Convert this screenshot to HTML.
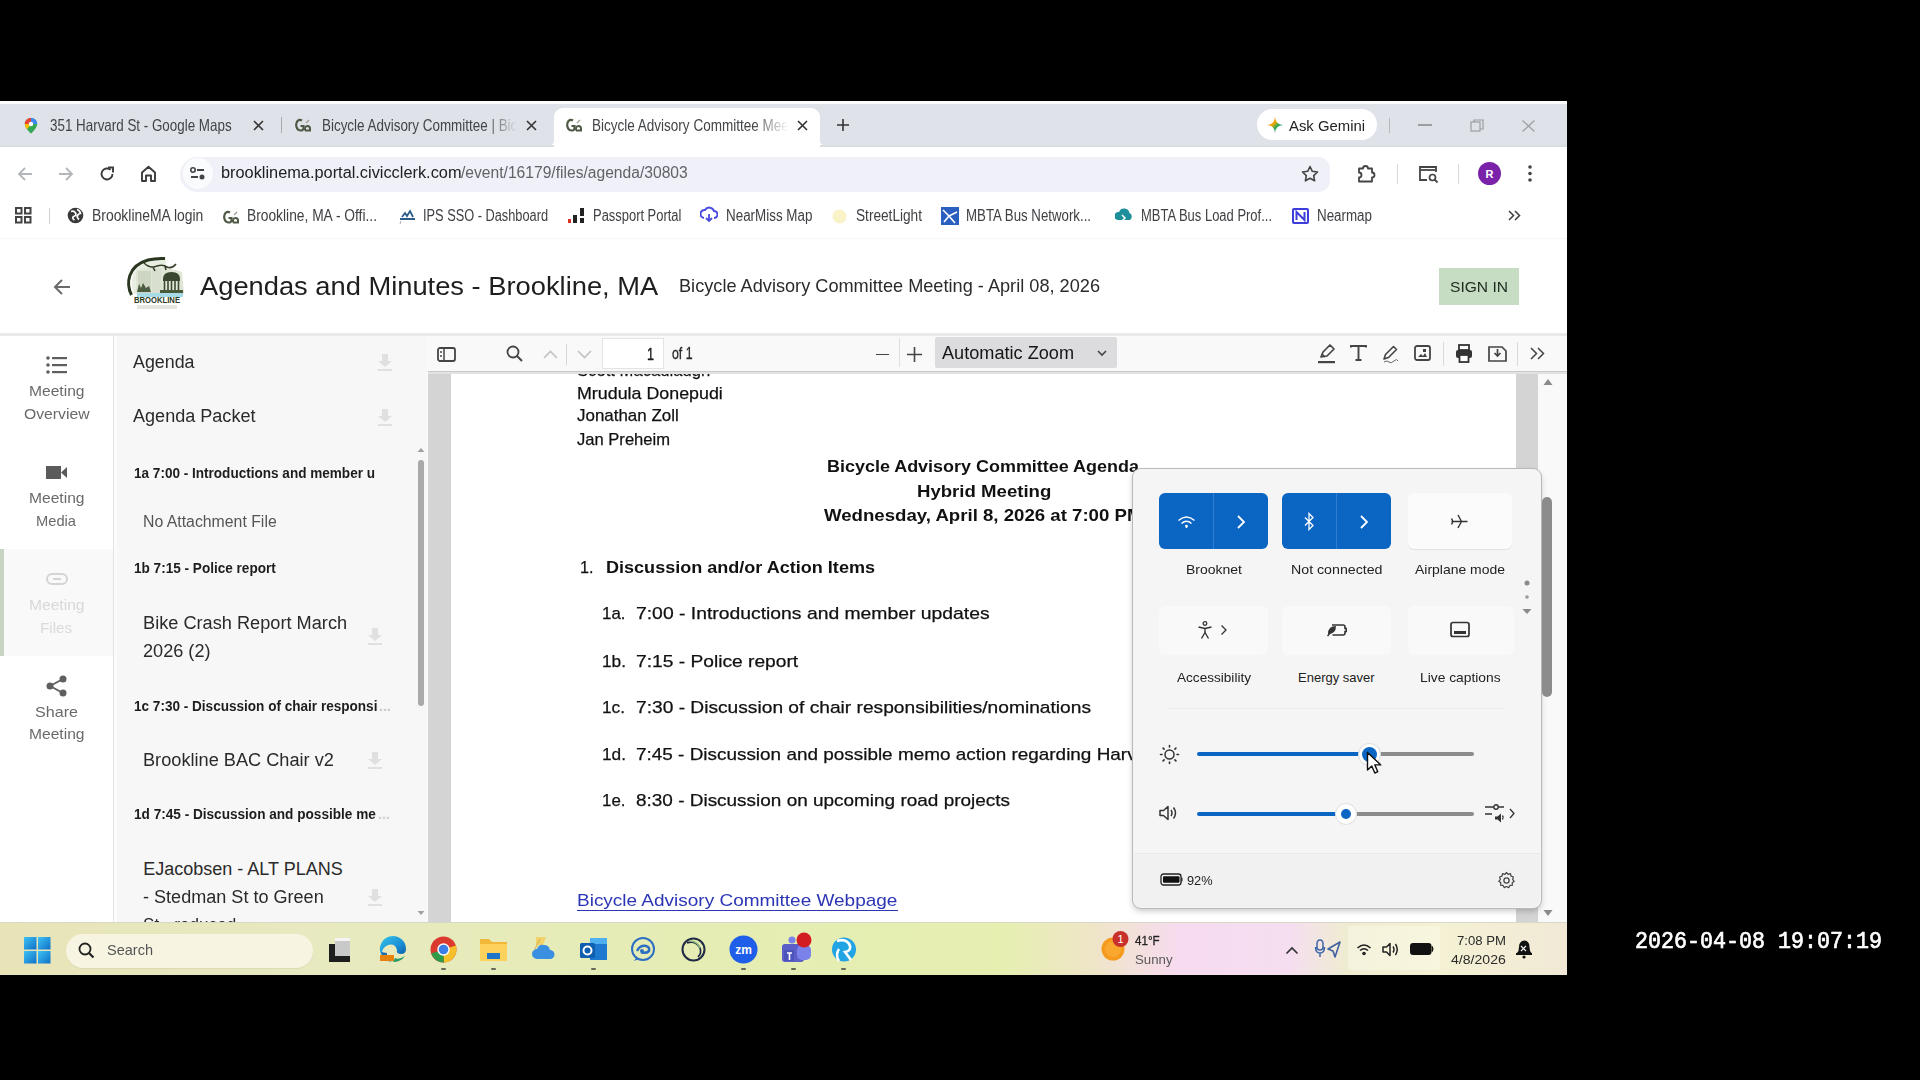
<!DOCTYPE html><html><head><meta charset="utf-8"><style>
html,body{margin:0;padding:0;background:#000;width:1920px;height:1080px;overflow:hidden;}
body>div,body>svg{position:absolute;}
.t{position:absolute;white-space:nowrap;line-height:1;font-family:"Liberation Sans",sans-serif;transform-origin:0 0;}
</style></head><body>
<div style="left:0px;top:101px;width:1567px;height:874px;background:#ffffff;"></div>
<div style="left:0px;top:101px;width:1567px;height:3px;background:#fbfcfd;"></div>
<div style="left:0px;top:104px;width:1567px;height:43px;background:#dfe3e9;"></div>
<div style="left:554px;top:108px;width:266px;height:40px;background:#ffffff;border-radius:9px 9px 0 0;"></div>
<div style="left:546px;top:139px;width:8px;height:8px;background:radial-gradient(circle at 0 0, #dfe3e9 8px, #fff 8.5px);"></div>
<div style="left:820px;top:139px;width:8px;height:8px;background:radial-gradient(circle at 8px 0, #dfe3e9 8px, #fff 8.5px);"></div>
<div style="left:0px;top:145px;width:554px;height:2px;background:#d9dce1;"></div>
<div style="left:820px;top:145px;width:747px;height:2px;background:#d9dce1;"></div>
<div style="left:0px;top:147px;width:1567px;height:91px;background:#ffffff;"></div>
<div style="left:0px;top:238px;width:1567px;height:1px;background:#f6f6f6;"></div>
<svg style="left:23px;top:117px;" width="16" height="17" viewBox="0 0 16 17"><path d="M8 1C4.4 1 1.8 3.6 1.8 7c0 4.2 6.2 9.6 6.2 9.6s6.2-5.4 6.2-9.6C14.2 3.6 11.6 1 8 1z" fill="#34a853"/><path d="M1.8 7C1.8 3.6 4.4 1 8 1v3.8A2.2 2.2 0 0 0 5.8 7z" fill="#ea4335"/><path d="M1.8 7h4a2.2 2.2 0 0 0 1 1.9L4 12.3C2.7 10.6 1.8 8.7 1.8 7z" fill="#fbbc04"/><path d="M8 1c3.6 0 6.2 2.6 6.2 6h-4A2.2 2.2 0 0 0 8 4.8z" fill="#4285f4"/><circle cx="8" cy="7" r="2.2" fill="#fff"/></svg>
<div class="t " style="left:50px;top:117.23px;font-size:16.5px;color:#424447;transform:scaleX(0.8115);">351 Harvard St - Google Maps</div>
<svg style="left:253px;top:120px;" width="11" height="11" viewBox="0 0 11 11"><path d="M1 1L10 10M10 1L1 10" stroke="#333" stroke-width="1.6"/></svg>
<div style="left:281px;top:117px;width:1px;height:16px;background:#a9adb2;"></div>
<svg style="left:295px;top:117px;" width="16" height="15" viewBox="0 0 16 15"><path d="M7 3.5Q4.5 2 2.5 4Q0.5 6.5 1.5 10Q2.5 13.5 6 13.5Q8 13.5 8.5 11.5V9H5.5" fill="none" stroke="#4f5a45" stroke-width="2.2"/><path d="M10 13.5Q9.5 9 12.5 9Q15 9 15 11.5V13.5H10" fill="none" stroke="#4f5a45" stroke-width="2"/><path d="M11 6l3-3" stroke="#9a9f90" stroke-width="1.2"/></svg>
<div class="t" style="left:321.6px;top:117.23px;font-size:16.5px;color:#424447;transform:scaleX(0.814);-webkit-mask-image:linear-gradient(90deg,#000 84%,transparent 100%);">Bicycle Advisory Committee | Bic</div>
<svg style="left:526px;top:120px;" width="11" height="11" viewBox="0 0 11 11"><path d="M1 1L10 10M10 1L1 10" stroke="#333" stroke-width="1.6"/></svg>
<svg style="left:566px;top:117px;" width="16" height="15" viewBox="0 0 16 15"><path d="M7 3.5Q4.5 2 2.5 4Q0.5 6.5 1.5 10Q2.5 13.5 6 13.5Q8 13.5 8.5 11.5V9H5.5" fill="none" stroke="#4f5a45" stroke-width="2.2"/><path d="M10 13.5Q9.5 9 12.5 9Q15 9 15 11.5V13.5H10" fill="none" stroke="#4f5a45" stroke-width="2"/><path d="M11 6l3-3" stroke="#9a9f90" stroke-width="1.2"/></svg>
<div class="t" style="left:592.2px;top:117.23px;font-size:16.5px;color:#424447;transform:scaleX(0.819);-webkit-mask-image:linear-gradient(90deg,#000 82%,transparent 100%);">Bicycle Advisory Committee Mee</div>
<svg style="left:797px;top:120px;" width="11" height="11" viewBox="0 0 11 11"><path d="M1 1L10 10M10 1L1 10" stroke="#333" stroke-width="1.6"/></svg>
<svg style="left:837px;top:119px;" width="12" height="12" viewBox="0 0 12 12"><path d="M6 0V12M0 6H12" stroke="#333" stroke-width="1.6"/></svg>
<div style="left:1257px;top:109px;width:120px;height:31px;background:#ffffff;border-radius:16px;"></div>
<svg style="left:1267px;top:117px;" width="16" height="16" viewBox="0 0 16 16"><defs><linearGradient id="gm" x1="0" y1="0" x2="1" y2="1"><stop offset="0" stop-color="#e94235"/><stop offset=".4" stop-color="#f9ab00"/><stop offset=".6" stop-color="#34a853"/><stop offset="1" stop-color="#4285f4"/></linearGradient></defs><path d="M8 0Q8.6 7.4 16 8Q8.6 8.6 8 16Q7.4 8.6 0 8Q7.4 7.4 8 0Z" fill="url(#gm)"/></svg>
<div class="t " style="left:1289px;top:117.80px;font-size:15px;color:#202124;transform:scaleX(0.9911);">Ask Gemini</div>
<div style="left:1389px;top:118px;width:1px;height:15px;background:#b5b9be;"></div>
<div style="left:1418px;top:124px;width:14px;height:1.5px;background:#9a9ea3;"></div>
<svg style="left:1470px;top:119px;" width="14" height="13" viewBox="0 0 14 13"><rect x="1" y="3" width="9" height="9" fill="none" stroke="#9a9ea3" stroke-width="1.2"/><path d="M4 3V1H13V10H10" fill="none" stroke="#9a9ea3" stroke-width="1.2"/></svg>
<svg style="left:1521px;top:120px;" width="15" height="12" viewBox="0 0 15 12"><path d="M1.5 0.5L13.5 11.5M13.5 0.5L1.5 11.5" stroke="#9a9ea3" stroke-width="1.2"/></svg>
<svg style="left:17px;top:166px;" width="16" height="16" viewBox="0 0 16 16"><path d="M15 8H2M8 2L2 8l6 6" fill="none" stroke="#b3b6ba" stroke-width="1.8"/></svg>
<svg style="left:58px;top:166px;" width="16" height="16" viewBox="0 0 16 16"><path d="M1 8H14M8 2l6 6-6 6" fill="none" stroke="#b3b6ba" stroke-width="1.8"/></svg>
<svg style="left:99px;top:166px;" width="16" height="16" viewBox="0 0 16 16"><path d="M13.5 8A5.5 5.5 0 1 1 11.6 3.8" fill="none" stroke="#3c3c3c" stroke-width="1.9"/><path d="M9 1.5h5v5" fill="none" stroke="#3c3c3c" stroke-width="1.9"/></svg>
<svg style="left:140px;top:165px;" width="17" height="17" viewBox="0 0 17 17"><path d="M2 16V7.5L8.5 1.8 15 7.5V16H11V10.5H6V16Z" fill="none" stroke="#3c3c3c" stroke-width="1.9" stroke-linejoin="round"/></svg>
<div style="left:180px;top:156.5px;width:1150px;height:35.5px;background:#eff0f8;border-radius:18px 12px 12px 18px;"></div>
<div style="left:183px;top:158px;width:30px;height:31px;background:#fafbfd;border-radius:16px;"></div>
<svg style="left:190px;top:167px;" width="15" height="13" viewBox="0 0 15 13"><circle cx="3" cy="3" r="2.2" fill="none" stroke="#444" stroke-width="1.6"/><path d="M7 3H14M1 10H8" stroke="#444" stroke-width="1.8"/><circle cx="12" cy="10" r="2.5" fill="#444"/></svg>
<div class="t " style="left:220.8px;top:165.46px;font-size:16px;color:#202124;transform:scaleX(1.0206);">brooklinema.portal.civicclerk.com</div>
<div class="t " style="left:461.3px;top:165.46px;font-size:16px;color:#5f6368;transform:scaleX(0.9763);">/event/16179/files/agenda/30803</div>
<svg style="left:1301px;top:165px;" width="18" height="18" viewBox="0 0 18 18"><path d="M9 1.5l2.3 4.8 5.2.7-3.8 3.6.9 5.2L9 13.3l-4.6 2.5.9-5.2L1.5 7l5.2-.7z" fill="none" stroke="#444" stroke-width="1.6" stroke-linejoin="round"/></svg>
<svg style="left:1356px;top:164px;" width="22" height="19" viewBox="0 0 22 19"><path d="M3 4.5h4a2.5 2.5 0 0 1 5 0h4v4a2.5 2.5 0 0 1 0 5v4H3v-4a2.5 2.5 0 0 0 0-5z" fill="none" stroke="#444" stroke-width="1.8" stroke-linejoin="round"/></svg>
<div style="left:1397px;top:164px;width:1px;height:20px;background:#d5d8dc;"></div>
<svg style="left:1418px;top:164px;" width="22" height="20" viewBox="0 0 22 20"><path d="M9 16H2V3h16v5" fill="none" stroke="#444" stroke-width="1.8"/><path d="M2 6h16" stroke="#444" stroke-width="1.8"/><circle cx="14.5" cy="13.5" r="3" fill="none" stroke="#444" stroke-width="1.7"/><path d="M16.7 15.7L19.5 18.5" stroke="#444" stroke-width="1.8"/></svg>
<div style="left:1458px;top:164px;width:1px;height:20px;background:#d5d8dc;"></div>
<div style="left:1478px;top:162px;width:23px;height:23px;background:#7a22a8;border-radius:50%;"></div>
<div class="t " style="left:1485.5px;top:168.69px;font-size:11px;color:#fff;font-weight:700;">R</div>
<svg style="left:1528px;top:165px;" width="4" height="17" viewBox="0 0 4 17"><circle cx="2" cy="2" r="1.8" fill="#444"/><circle cx="2" cy="8.5" r="1.8" fill="#444"/><circle cx="2" cy="15" r="1.8" fill="#444"/></svg>
<svg style="left:15px;top:207px;" width="17" height="17" viewBox="0 0 17 17"><g fill="none" stroke="#444" stroke-width="2"><rect x="1" y="1" width="5.5" height="5.5"/><rect x="10" y="1" width="5.5" height="5.5"/><rect x="1" y="10" width="5.5" height="5.5"/><rect x="10" y="10" width="5.5" height="5.5"/></g></svg>
<div style="left:49px;top:208px;width:1px;height:16px;background:#cfd3d8;"></div>
<svg style="left:67px;top:207px;" width="17" height="17" viewBox="0 0 17 17"><circle cx="8.5" cy="8.5" r="7.8" fill="#3a3a3a"/><path d="M4 4.5q3-1 4.5 1.5t-2 3.5q-2 1.5 1 3.5M10 2.5q3 1 3.5 4q-2 0-3 2q-1 2 1.5 4" fill="none" stroke="#fff" stroke-width="1.7"/></svg>
<div class="t " style="left:92px;top:208.06px;font-size:16px;color:#3f4144;transform:scaleX(0.8690);">BrooklineMA login</div>
<svg style="left:223px;top:209px;" width="16" height="15" viewBox="0 0 16 15"><path d="M7 3.5Q4.5 2 2.5 4Q0.5 6.5 1.5 10Q2.5 13.5 6 13.5Q8 13.5 8.5 11.5V9H5.5" fill="none" stroke="#4f5a45" stroke-width="2.2"/><path d="M10 13.5Q9.5 9 12.5 9Q15 9 15 11.5V13.5H10" fill="none" stroke="#4f5a45" stroke-width="2"/><path d="M11 6l3-3" stroke="#9a9f90" stroke-width="1.2"/></svg>
<div class="t " style="left:247px;top:208.06px;font-size:16px;color:#3f4144;transform:scaleX(0.8617);">Brookline, MA - Offi...</div>
<svg style="left:399px;top:208px;" width="17" height="16" viewBox="0 0 17 16"><path d="M1 11h15M3 9l3-4 2 3 3-5 3 6" fill="none" stroke="#2a5d8a" stroke-width="1.8"/><path d="M2 13l-1 3" stroke="#aaa" stroke-width="1"/></svg>
<div class="t " style="left:423px;top:208.06px;font-size:16px;color:#3f4144;transform:scaleX(0.7986);">IPS SSO - Dashboard</div>
<svg style="left:567px;top:207px;" width="19" height="17" viewBox="0 0 19 17"><rect x="1" y="12" width="3" height="4" fill="#d93025"/><rect x="6" y="8" width="4" height="8" fill="#222"/><rect x="13" y="1" width="4" height="8" fill="#222"/><rect x="13" y="11" width="4" height="5" fill="#222"/></svg>
<div class="t " style="left:592.6px;top:208.06px;font-size:16px;color:#3f4144;transform:scaleX(0.8082);">Passport Portal</div>
<svg style="left:700px;top:206px;" width="18" height="19" viewBox="0 0 18 19"><path d="M4 12a4 4 0 0 1 1-8 5 5 0 0 1 9 1 3.5 3.5 0 0 1 0 7" fill="none" stroke="#4a4ae0" stroke-width="2"/><path d="M6 12l3 3 3-3M9 8v7" fill="none" stroke="#4a4ae0" stroke-width="1.8"/></svg>
<div class="t " style="left:725.6px;top:208.06px;font-size:16px;color:#3f4144;transform:scaleX(0.8377);">NearMiss Map</div>
<svg style="left:831px;top:208px;" width="17" height="17" viewBox="0 0 17 17"><circle cx="8.5" cy="8.5" r="7" fill="#faf3c8"/></svg>
<div class="t " style="left:856px;top:208.06px;font-size:16px;color:#3f4144;transform:scaleX(0.8529);">StreetLight</div>
<svg style="left:941px;top:207px;" width="18" height="18" viewBox="0 0 18 18"><rect x="0" y="0" width="18" height="18" fill="#2a5fc0"/><path d="M2 3l6 6-5 6M8 9l8-4M8 9l6 7" stroke="#fff" stroke-width="1.6" fill="none"/></svg>
<div class="t " style="left:966px;top:208.06px;font-size:16px;color:#3f4144;transform:scaleX(0.8286);">MBTA Bus Network...</div>
<svg style="left:1115px;top:206px;" width="19" height="19" viewBox="0 0 19 19"><path d="M3 14a4 4 0 0 1 1-8 5.5 5.5 0 0 1 10.5 1 3.8 3.8 0 0 1 0 7z" fill="#1d8f9a"/><path d="M7 9l3 3-3 3" stroke="#fff" stroke-width="1.5" fill="none"/></svg>
<div class="t " style="left:1141px;top:208.06px;font-size:16px;color:#3f4144;transform:scaleX(0.8108);">MBTA Bus Load Prof...</div>
<svg style="left:1291px;top:207px;" width="19" height="18" viewBox="0 0 19 18"><rect x="1" y="1" width="17" height="16" rx="2" fill="#3d3ddb"/><rect x="3" y="3" width="13" height="12" fill="#fff"/><path d="M5.5 13V5l8 8V5" stroke="#3d3ddb" stroke-width="2" fill="none"/></svg>
<div class="t " style="left:1317px;top:208.06px;font-size:16px;color:#3f4144;transform:scaleX(0.8358);">Nearmap</div>
<svg style="left:1508px;top:210px;" width="13" height="11" viewBox="0 0 13 11"><path d="M1 1l4.5 4.5L1 10M7 1l4.5 4.5L7 10" fill="none" stroke="#444" stroke-width="1.6"/></svg>
<svg style="left:52px;top:278px;" width="19" height="18" viewBox="0 0 19 18"><path d="M18 9H3M10 2L3 9l7 7" fill="none" stroke="#6b6b6b" stroke-width="2"/></svg>
<svg style="left:120px;top:250px;" width="75" height="68" viewBox="0 0 75 68"><path d="M14 44 C8 30 14 14 30 9 L46 8 L46 44 Z" fill="#e9eee2"/>
<path d="M16 20 Q40 14 62 22 L64 44 L16 44Z" fill="#dfe6d6"/>
<rect x="18" y="21" width="13" height="22" fill="#cdd6c2"/><rect x="32" y="18" width="9" height="25" fill="#d8dfcf"/>
<path d="M17 42 L19 34 L21 38 L23 33 L26 38 L29 36 L31 42Z" fill="#4c5e42"/>
<path d="M43 29 Q43 22 51.5 22 Q60 22 60 29Z" fill="#3a4630"/>
<rect x="43" y="29" width="17" height="2" fill="#3a4630"/>
<path d="M44.5 31v10M48 31v10M51.5 31v10M55 31v10M58.5 31v10" stroke="#3e4a34" stroke-width="1.6"/>
<rect x="40" y="40" width="23" height="3" fill="#4a5a3a"/>
<rect x="17" y="43" width="46" height="4" fill="#a6dce8"/>
<path d="M11.5 45 C6 34 7 16 28 10 Q36 8 45 8.5" fill="none" stroke="#2a3620" stroke-width="3"/>
<path d="M24 13 Q30 19 37 16 Q43 14 47 17 Q52 19 56 14 M33 17 l2 4 M45 16 l1 4" fill="none" stroke="#34402a" stroke-width="1.6"/>
<text x="37" y="53.3" text-anchor="middle" font-family="Liberation Sans" font-weight="700" font-size="9" fill="#2b3a22" textLength="46" lengthAdjust="spacingAndGlyphs">BROOKLINE</text>
<rect x="17" y="55" width="40" height="4" fill="#e4e6e0"/></svg>
<div class="t " style="left:200.4px;top:273.48px;font-size:26.6px;color:#1e1e1e;transform:scaleX(1.0263);">Agendas and Minutes - Brookline, MA</div>
<div class="t " style="left:678.7px;top:276.42px;font-size:19px;color:#2b2b2b;transform:scaleX(0.9560);">Bicycle Advisory Committee Meeting - April 08, 2026</div>
<div style="left:1439px;top:268px;width:80px;height:37px;background:#c6dcc3;"></div>
<div class="t " style="left:1449.6px;top:278.90px;font-size:15px;color:#1e2a1e;transform:scaleX(1.0387);">SIGN IN</div>
<div style="left:0px;top:333px;width:1567px;height:3px;background:#e9e9e9;"></div>
<div style="left:0px;top:336px;width:113px;height:586px;background:#ffffff;"></div>
<div style="left:113px;top:336px;width:1px;height:586px;background:#e4e4e4;"></div>
<svg style="left:46px;top:356px;" width="22" height="18" viewBox="0 0 22 18"><g fill="#5f5f5f"><circle cx="2" cy="2" r="1.8"/><circle cx="2" cy="9" r="1.8"/><circle cx="2" cy="16" r="1.8"/><rect x="6" y="1" width="15" height="2.2"/><rect x="6" y="8" width="15" height="2.2"/><rect x="6" y="15" width="15" height="2.2"/></g></svg>
<div class="t " style="left:28.5px;top:382.90px;font-size:15px;color:#6a6a6a;transform:scaleX(1.0400);">Meeting</div>
<div class="t " style="left:23.5px;top:406.00px;font-size:15px;color:#6a6a6a;transform:scaleX(1.0478);">Overview</div>
<svg style="left:46px;top:465px;" width="22" height="15" viewBox="0 0 22 15"><rect x="0" y="1" width="15" height="13" fill="#5b5b5b"/><path d="M15 7.5L21 2V13Z" fill="#5b5b5b"/></svg>
<div class="t " style="left:28.5px;top:490.30px;font-size:15px;color:#6a6a6a;transform:scaleX(1.0400);">Meeting</div>
<div class="t " style="left:36px;top:512.50px;font-size:15px;color:#6a6a6a;transform:scaleX(0.9791);">Media</div>
<div style="left:0px;top:549px;width:113px;height:107px;background:#f9f9f9;"></div>
<div style="left:0px;top:549px;width:4px;height:107px;background:#c8d3c1;"></div>
<svg style="left:46px;top:572px;" width="22" height="14" viewBox="0 0 22 14"><rect x="1" y="2" width="20" height="10" rx="5" fill="none" stroke="#d4d4d4" stroke-width="2"/><path d="M7 7h8" stroke="#d4d4d4" stroke-width="2"/></svg>
<div class="t " style="left:28.5px;top:597.30px;font-size:15px;color:#d8d8d8;transform:scaleX(1.0400);">Meeting</div>
<div class="t " style="left:40px;top:620.00px;font-size:15px;color:#dadada;transform:scaleX(1.0104);">Files</div>
<svg style="left:46px;top:675px;" width="22" height="22" viewBox="0 0 22 22"><circle cx="17" cy="4" r="3.5" fill="#5f5f5f"/><circle cx="4" cy="11" r="3.5" fill="#5f5f5f"/><circle cx="17" cy="18" r="3.5" fill="#5f5f5f"/><path d="M17 4L4 11L17 18" fill="none" stroke="#5f5f5f" stroke-width="1.8"/></svg>
<div class="t " style="left:35px;top:704.30px;font-size:15px;color:#6a6a6a;transform:scaleX(1.0743);">Share</div>
<div class="t " style="left:28.5px;top:725.90px;font-size:15px;color:#6a6a6a;transform:scaleX(1.0400);">Meeting</div>
<div style="left:114px;top:336px;width:313px;height:586px;background:#f7f7f7;"></div>
<div style="left:114px;top:336px;width:3px;height:586px;background:#fbfbfb;"></div>
<div class="t " style="left:132.5px;top:353.06px;font-size:18px;color:#2a2a2a;transform:scaleX(0.9910);">Agenda</div>
<svg style="left:378px;top:354px;" width="14" height="17" viewBox="0 0 14 17"><path d="M4 0h6v7h4L7 13 0 7h4z" fill="#e0e0e0"/><rect x="0" y="15" width="14" height="2" fill="#e0e0e0"/></svg>
<div class="t " style="left:132.5px;top:407.26px;font-size:18px;color:#2a2a2a;transform:scaleX(1.0033);">Agenda Packet</div>
<svg style="left:378px;top:409px;" width="14" height="17" viewBox="0 0 14 17"><path d="M4 0h6v7h4L7 13 0 7h4z" fill="#e0e0e0"/><rect x="0" y="15" width="14" height="2" fill="#e0e0e0"/></svg>
<div class="t " style="left:134px;top:465.65px;font-size:14px;color:#1d1d1d;font-weight:700;transform:scaleX(0.9681);">1a 7:00 - Introductions and member u</div>
<div class="t " style="left:143px;top:513.96px;font-size:16px;color:#555555;transform:scaleX(0.9891);">No Attachment File</div>
<div class="t " style="left:134px;top:561.45px;font-size:14px;color:#1d1d1d;font-weight:700;transform:scaleX(0.9694);">1b 7:15 - Police report</div>
<div class="t " style="left:142.5px;top:613.76px;font-size:18px;color:#2a2a2a;transform:scaleX(1.0100);">Bike Crash Report March</div>
<div class="t " style="left:142.5px;top:641.66px;font-size:18px;color:#2a2a2a;transform:scaleX(1.0068);">2026 (2)</div>
<svg style="left:368px;top:628px;" width="14" height="17" viewBox="0 0 14 17"><path d="M4 0h6v7h4L7 13 0 7h4z" fill="#e0e0e0"/><rect x="0" y="15" width="14" height="2" fill="#e0e0e0"/></svg>
<div class="t " style="left:134px;top:698.65px;font-size:14px;color:#1d1d1d;font-weight:700;transform:scaleX(0.9685);">1c 7:30 - Discussion of chair responsi</div>
<div class="t " style="left:379px;top:698.65px;font-size:14px;color:#c8c8c8;font-weight:700;">...</div>
<div class="t " style="left:142.5px;top:750.76px;font-size:18px;color:#2a2a2a;transform:scaleX(1.0096);">Brookline BAC Chair v2</div>
<svg style="left:368px;top:752px;" width="14" height="17" viewBox="0 0 14 17"><path d="M4 0h6v7h4L7 13 0 7h4z" fill="#e0e0e0"/><rect x="0" y="15" width="14" height="2" fill="#e0e0e0"/></svg>
<div class="t " style="left:134px;top:807.35px;font-size:14px;color:#1d1d1d;font-weight:700;transform:scaleX(0.9712);">1d 7:45 - Discussion and possible me</div>
<div class="t " style="left:378px;top:807.35px;font-size:14px;color:#cfcfcf;font-weight:700;">...</div>
<div class="t " style="left:143.3px;top:859.76px;font-size:18px;color:#2a2a2a;">EJacobsen - ALT PLANS</div>
<div class="t " style="left:143.3px;top:888.06px;font-size:18px;color:#2a2a2a;transform:scaleX(1.0034);">- Stedman St to Green</div>
<div style="left:114px;top:905px;width:303px;height:17px;overflow:hidden;"><div class="t" style="left:29.30px;top:11.36px;font-size:18px;color:#2a2a2a;transform:scaleX(0.9500);">St - reduced</div></div>
<svg style="left:368px;top:889px;" width="14" height="17" viewBox="0 0 14 17"><path d="M4 0h6v7h4L7 13 0 7h4z" fill="#e0e0e0"/><rect x="0" y="15" width="14" height="2" fill="#e0e0e0"/></svg>
<div style="left:416px;top:446px;width:10px;height:476px;background:#f7f7f7;"></div>
<svg style="left:417px;top:447px;" width="8" height="6" viewBox="0 0 8 6"><path d="M4 1L7.5 5H.5z" fill="#a0a0a0"/></svg>
<div style="left:418px;top:460px;width:6px;height:246px;background:#a9a9a9;border-radius:3px;"></div>
<svg style="left:417px;top:910px;" width="8" height="6" viewBox="0 0 8 6"><path d="M4 5L7.5 1H.5z" fill="#a0a0a0"/></svg>
<div style="left:427px;top:336px;width:1px;height:586px;background:#fafafa;"></div>
<div style="left:428px;top:336px;width:1139px;height:586px;background:#d4d4d4;"></div>
<div style="left:451px;top:374px;width:1065px;height:548px;background:#ffffff;"></div>
<div style="left:1538px;top:374px;width:29px;height:548px;background:#f9f9f9;"></div>
<svg style="left:1543px;top:378px;" width="10" height="8" viewBox="0 0 10 8"><path d="M5 1L9.5 7H.5z" fill="#8a8a8a"/></svg>
<svg style="left:1543px;top:909px;" width="10" height="8" viewBox="0 0 10 8"><path d="M5 7L9.5 1H.5z" fill="#8a8a8a"/></svg>
<div style="left:428px;top:336px;width:1139px;height:36px;background:#f9f9fa;"></div>
<div style="left:428px;top:371px;width:1139px;height:1px;background:#c9c9c9;"></div>
<div style="left:428px;top:372px;width:1139px;height:2px;background:#e2e2e2;"></div>
<svg style="left:437px;top:347px;" width="19" height="15" viewBox="0 0 19 15"><rect x="1" y="1" width="17" height="13" rx="2" fill="none" stroke="#444" stroke-width="1.8"/><path d="M7 1v13" stroke="#444" stroke-width="1.5"/><circle cx="4" cy="5" r="1" fill="#444"/><circle cx="4" cy="9" r="1" fill="#444"/></svg>
<svg style="left:506px;top:345px;" width="17" height="17" viewBox="0 0 17 17"><circle cx="7" cy="7" r="5.5" fill="none" stroke="#444" stroke-width="1.8"/><path d="M11 11l5 5" stroke="#444" stroke-width="2"/></svg>
<svg style="left:543px;top:350px;" width="15" height="9" viewBox="0 0 15 9"><path d="M1 8l6.5-6.5L14 8" fill="none" stroke="#c2c2c2" stroke-width="1.6"/></svg>
<div style="left:566px;top:344px;width:1px;height:21px;background:#d6d6d6;"></div>
<svg style="left:577px;top:350px;" width="15" height="9" viewBox="0 0 15 9"><path d="M1 1l6.5 6.5L14 1" fill="none" stroke="#c2c2c2" stroke-width="1.6"/></svg>
<div style="left:602px;top:338px;width:62px;height:31px;background:#ffffff;box-shadow:inset 0 0 0 1px #e3e3e3;"></div>
<div class="t " style="left:647px;top:345.61px;font-size:17px;color:#1a1a1a;transform:scaleX(0.7404);-webkit-text-stroke:0.4px #1a1a1a;">1</div>
<div class="t " style="left:671.6px;top:346.46px;font-size:16px;color:#2a2a2a;transform:scaleX(0.7719);-webkit-text-stroke:0.3px #2a2a2a;">of 1</div>
<div style="left:875.6px;top:353.5px;width:13px;height:1.6px;background:#444;"></div>
<div style="left:899px;top:338px;width:1px;height:29px;background:#dedede;"></div>
<svg style="left:907px;top:347px;" width="15" height="15" viewBox="0 0 15 15"><path d="M7.5 0V15M0 7.5H15" stroke="#444" stroke-width="1.6"/></svg>
<div style="left:935px;top:337px;width:182px;height:31px;background:#dcdcde;border-radius:2px;"></div>
<div class="t " style="left:942px;top:343.96px;font-size:18px;color:#161616;transform:scaleX(1.0073);">Automatic Zoom</div>
<svg style="left:1097px;top:350px;" width="10" height="7" viewBox="0 0 10 7"><path d="M1 1l4 4 4-4" fill="none" stroke="#444" stroke-width="1.6"/></svg>
<svg style="left:1317px;top:344px;" width="19" height="20" viewBox="0 0 19 20"><path d="M4 13l2-5 7-7 4 4-7 7z" fill="none" stroke="#444" stroke-width="1.7" stroke-linejoin="round"/><path d="M5 10l3 3" stroke="#444" stroke-width="1.5"/><rect x="1" y="17" width="17" height="2.2" fill="#444"/></svg>
<svg style="left:1350px;top:345px;" width="17" height="16" viewBox="0 0 17 16"><path d="M1 2.5V1H16V2.5M8.5 1V15M5.5 15H11.5" fill="none" stroke="#444" stroke-width="1.9"/></svg>
<svg style="left:1382px;top:344px;" width="18" height="20" viewBox="0 0 18 20"><path d="M2 15l1.5-4.5 8-8 3 3-8 8z" fill="none" stroke="#444" stroke-width="1.6" stroke-linejoin="round"/><path d="M2 18q3-2 5 0t5-1 4 0" fill="none" stroke="#666" stroke-width="1"/></svg>
<svg style="left:1414px;top:345px;" width="17" height="16" viewBox="0 0 17 16"><rect x="1" y="1" width="15" height="14" rx="2" fill="none" stroke="#444" stroke-width="1.8"/><path d="M4 12l3-3 2 2 2-3 2 4z" fill="#444"/><rect x="9" y="4" width="3" height="3" fill="#444"/></svg>
<div style="left:1443px;top:342px;width:1px;height:24px;background:#d9d9d9;"></div>
<svg style="left:1455px;top:344px;" width="18" height="19" viewBox="0 0 18 19"><rect x="4" y="1" width="10" height="5" fill="none" stroke="#333" stroke-width="1.8"/><rect x="1" y="6" width="16" height="8" rx="2" fill="#333"/><rect x="4.5" y="11" width="9" height="7" fill="#fff" stroke="#333" stroke-width="1.8"/></svg>
<svg style="left:1488px;top:344px;" width="19" height="18" viewBox="0 0 19 18"><path d="M1 3V17H18V7L14 3H1z" fill="none" stroke="#444" stroke-width="1.7"/><path d="M9.5 5V12M6.5 9l3 3 3-3" fill="none" stroke="#444" stroke-width="1.7"/></svg>
<div style="left:1517px;top:342px;width:1px;height:24px;background:#d9d9d9;"></div>
<svg style="left:1530px;top:347px;" width="15" height="13" viewBox="0 0 15 13"><path d="M1 1l5.5 5.5L1 12M8 1l5.5 5.5L8 12" fill="none" stroke="#444" stroke-width="1.5"/></svg>
<div style="left:451px;top:374px;width:700px;height:10px;overflow:hidden;"><div class="t" style="left:125.70px;top:-11.89px;font-size:17px;color:#111111;transform:scaleX(0.9795);-webkit-text-stroke:0.25px #111;">Scott Macaulaugh</div></div>
<div class="t " style="left:576.7px;top:384.81px;font-size:17px;color:#111111;transform:scaleX(1.0495);-webkit-text-stroke:0.25px #111;">Mrudula Donepudi</div>
<div class="t " style="left:577px;top:407.21px;font-size:17px;color:#111111;transform:scaleX(0.9964);-webkit-text-stroke:0.25px #111;">Jonathan Zoll</div>
<div class="t " style="left:577px;top:431.11px;font-size:17px;color:#111111;transform:scaleX(0.9745);-webkit-text-stroke:0.25px #111;">Jan Preheim</div>
<div class="t " style="left:827.4px;top:457.91px;font-size:17px;color:#111111;font-weight:700;transform:scaleX(1.0559);">Bicycle Advisory Committee Agenda</div>
<div class="t " style="left:916.5px;top:482.51px;font-size:17px;color:#111111;font-weight:700;transform:scaleX(1.0937);">Hybrid Meeting</div>
<div style="left:800px;top:500px;width:333px;height:30px;overflow:hidden;"><div class="t" style="left:24.30px;top:7.01px;font-size:17px;color:#111111;font-weight:700;transform:scaleX(1.0953);">Wednesday, April 8, 2026 at 7:00 PM</div></div>
<div class="t " style="left:580px;top:559.31px;font-size:17px;color:#111111;transform:scaleX(0.9522);-webkit-text-stroke:0.25px #111;">1.</div>
<div class="t " style="left:606px;top:559.31px;font-size:17px;color:#111111;font-weight:700;transform:scaleX(1.0612);">Discussion and/or Action Items</div>
<div class="t " style="left:601.5px;top:605.41px;font-size:17px;color:#111111;transform:scaleX(0.9944);-webkit-text-stroke:0.25px #111;">1a.</div>
<div class="t " style="left:636px;top:605.41px;font-size:17px;color:#111111;transform:scaleX(1.1373);-webkit-text-stroke:0.25px #111;">7:00 - Introductions and member updates</div>
<div class="t " style="left:601.5px;top:652.51px;font-size:17px;color:#111111;transform:scaleX(1.0155);-webkit-text-stroke:0.25px #111;">1b.</div>
<div class="t " style="left:636px;top:652.51px;font-size:17px;color:#111111;transform:scaleX(1.1293);-webkit-text-stroke:0.25px #111;">7:15 - Police report</div>
<div class="t " style="left:601.5px;top:698.61px;font-size:17px;color:#111111;transform:scaleX(1.0142);-webkit-text-stroke:0.25px #111;">1c.</div>
<div class="t " style="left:636px;top:698.61px;font-size:17px;color:#111111;transform:scaleX(1.1277);-webkit-text-stroke:0.25px #111;">7:30 - Discussion of chair responsibilities/nominations</div>
<div class="t " style="left:601.5px;top:746.21px;font-size:17px;color:#111111;transform:scaleX(1.0155);-webkit-text-stroke:0.25px #111;">1d.</div>
<div style="left:630px;top:740px;width:503px;height:30px;overflow:hidden;"><div class="t" style="left:6.00px;top:6.21px;font-size:17px;color:#111111;transform:scaleX(1.1130);-webkit-text-stroke:0.25px #111;">7:45 - Discussion and possible memo action regarding Harvard</div></div>
<div class="t " style="left:601.5px;top:792.31px;font-size:17px;color:#111111;transform:scaleX(0.9944);-webkit-text-stroke:0.25px #111;">1e.</div>
<div class="t " style="left:636px;top:792.31px;font-size:17px;color:#111111;transform:scaleX(1.1149);-webkit-text-stroke:0.25px #111;">8:30 - Discussion on upcoming road projects</div>
<div class="t " style="left:577px;top:892.21px;font-size:17px;color:#2b35b5;transform:scaleX(1.1167);">Bicycle Advisory Committee Webpage</div>
<div style="left:577px;top:910px;width:321px;height:1.3px;background:#2b35b5;"></div>
<div style="left:1133px;top:469px;width:408px;height:439px;background:#f5f5f5;border-radius:8px;box-shadow:0 0 0 1px #b9b9b9, 0 3px 6px rgba(0,0,0,.22);"></div>
<div style="left:1134px;top:853px;width:406px;height:54px;background:#f1f1f1;border-radius:0 0 7px 7px;"></div>
<div style="left:1134px;top:853px;width:406px;height:1px;background:#e9e9e9;"></div>
<div style="left:1159px;top:493px;width:109px;height:56px;background:#0a66c2;border-radius:6px;"></div>
<div style="left:1213px;top:493px;width:1px;height:56px;background:#2f7fd0;"></div>
<div style="left:1282px;top:493px;width:109px;height:56px;background:#0a66c2;border-radius:6px;"></div>
<div style="left:1336px;top:493px;width:1px;height:56px;background:#2f7fd0;"></div>
<svg style="left:1177px;top:515px;" width="19" height="14" viewBox="0 0 19 14"><path d="M1.5 5.5Q9.5-1.5 17.5 5.5M4.5 8.5Q9.5 4 14.5 8.5M9.5 13v-3" fill="none" stroke="#fff" stroke-width="1.5"/><circle cx="9.5" cy="11" r="1.3" fill="#fff"/></svg>
<svg style="left:1236px;top:514px;" width="10" height="16" viewBox="0 0 10 16"><path d="M2 2l6 6-6 6" fill="none" stroke="#fff" stroke-width="1.8"/></svg>
<svg style="left:1303px;top:512px;" width="12" height="19" viewBox="0 0 12 19"><path d="M2 5.5l8 8-4 4V1.5l4 4-8 8" fill="none" stroke="#fff" stroke-width="1.3"/></svg>
<svg style="left:1359px;top:514px;" width="10" height="16" viewBox="0 0 10 16"><path d="M2 2l6 6-6 6" fill="none" stroke="#fff" stroke-width="1.8"/></svg>
<div style="left:1408px;top:493px;width:104px;height:56px;background:#fbfbfb;border-radius:6px;box-shadow:0 1px 0 #e2e2e2;"></div>
<svg style="left:1450px;top:512px;" width="19" height="19" viewBox="0 0 19 19"><g transform="rotate(90 9.5 9.5)"><path d="M9.5 1.5v16M3 11l6.5-3.5L16 11M6.5 17.5l3-1.5 3 1.5" fill="none" stroke="#333" stroke-width="1.4" stroke-linejoin="round"/></g></svg>
<div class="t " style="left:1186px;top:562.50px;font-size:13px;color:#222222;transform:scaleX(1.0762);">Brooknet</div>
<div class="t " style="left:1291px;top:562.50px;font-size:13px;color:#222222;transform:scaleX(1.0914);">Not connected</div>
<div class="t " style="left:1415px;top:562.50px;font-size:13px;color:#222222;transform:scaleX(1.0736);">Airplane mode</div>
<div style="left:1159px;top:606px;width:109px;height:49px;background:#f9f9f9;border-radius:6px;"></div>
<div style="left:1282px;top:606px;width:109px;height:49px;background:#f9f9f9;border-radius:6px;"></div>
<div style="left:1408px;top:606px;width:106px;height:49px;background:#f9f9f9;border-radius:6px;"></div>
<svg style="left:1197px;top:621px;" width="16" height="18" viewBox="0 0 16 18"><circle cx="8" cy="2.5" r="1.8" fill="none" stroke="#333" stroke-width="1.3"/><path d="M1.5 6l6.5 1.5L14.5 6M8 7.5v4l-3.5 6M8 11.5l3.5 6" fill="none" stroke="#333" stroke-width="1.4" stroke-linejoin="round"/></svg>
<svg style="left:1220px;top:624px;" width="8" height="12" viewBox="0 0 8 12"><path d="M1.5 1.5l4.5 4.5-4.5 4.5" fill="none" stroke="#333" stroke-width="1.3"/></svg>
<svg style="left:1326px;top:622px;" width="21" height="16" viewBox="0 0 21 16"><path d="M6 3H17a2 2 0 0 1 2 2v1.5h1.3v3H19V11a2 2 0 0 1-2 2H6.5" fill="none" stroke="#333" stroke-width="1.6"/><path d="M2 12q0-8 8-8q0 8-8 8z" fill="#333"/><path d="M1.5 14L6 9" stroke="#333" stroke-width="1.4"/></svg>
<svg style="left:1450px;top:621px;" width="20" height="17" viewBox="0 0 20 17"><rect x="1" y="1.5" width="18" height="14" rx="2" fill="none" stroke="#333" stroke-width="1.7"/><rect x="4" y="10" width="12" height="3" fill="#333"/></svg>
<div class="t " style="left:1177px;top:670.50px;font-size:13px;color:#222222;transform:scaleX(1.0452);">Accessibility</div>
<div class="t " style="left:1298px;top:670.50px;font-size:13px;color:#222222;">Energy saver</div>
<div class="t " style="left:1419.8px;top:670.50px;font-size:13px;color:#222222;transform:scaleX(1.0622);">Live captions</div>
<svg style="left:1521px;top:577px;" width="12" height="42" viewBox="0 0 12 42"><circle cx="6" cy="6" r="2.5" fill="#8a8a8a"/><circle cx="6" cy="20" r="1.8" fill="#9a9a9a"/><path d="M1.5 32h9l-4.5 5z" fill="#8a8a8a"/></svg>
<div style="left:1167px;top:708px;width:337px;height:1px;background:#ebebeb;"></div>
<svg style="left:1159px;top:744px;" width="21" height="21" viewBox="0 0 21 21"><circle cx="10.5" cy="10.5" r="4.5" fill="none" stroke="#333" stroke-width="1.5"/><g stroke="#333" stroke-width="1.6" stroke-linecap="round"><path d="M10.5 1.5v1.5M10.5 18v1.5M1.5 10.5H3M18 10.5h1.5M4.1 4.1l1 1M15.9 15.9l1 1M4.1 16.9l1-1M15.9 5.1l1-1"/></g></svg>
<div style="left:1197px;top:751.5px;width:172px;height:4px;background:#0a66c2;border-radius:2px;"></div>
<div style="left:1369px;top:751.5px;width:105px;height:4px;background:#8b8b8b;border-radius:2px;"></div>
<div style="left:1358.5px;top:743.5px;width:21px;height:21px;background:#ffffff;border-radius:50%;box-shadow:0 0 0 1px #e0e0e0;"></div>
<div style="left:1361.5px;top:746.5px;width:15px;height:15px;background:#0a66c2;border-radius:50%;"></div>
<svg style="left:1366px;top:751px;" width="16" height="25" viewBox="0 0 16 25"><path d="M1.5 1.5V19l4.3-4 3 7 3-1.3-3-6.8h6z" fill="#fff" stroke="#111" stroke-width="1.4" stroke-linejoin="round"/></svg>
<svg style="left:1158px;top:804px;" width="20" height="18" viewBox="0 0 20 18"><path d="M2 6.5h3.5L10 2.5v13L5.5 11.5H2z" fill="none" stroke="#333" stroke-width="1.5" stroke-linejoin="round"/><path d="M13 6q2 3 0 6M15.5 3.5q4 5.5 0 11" fill="none" stroke="#333" stroke-width="1.5"/></svg>
<div style="left:1197px;top:811.5px;width:149px;height:4px;background:#0a66c2;border-radius:2px;"></div>
<div style="left:1346px;top:811.5px;width:128px;height:4px;background:#8b8b8b;border-radius:2px;"></div>
<div style="left:1336px;top:803.5px;width:20px;height:20px;background:#ffffff;border-radius:50%;box-shadow:0 0 0 1px #e3e3e3;"></div>
<div style="left:1341px;top:808.5px;width:10px;height:10px;background:#0a66c2;border-radius:50%;"></div>
<svg style="left:1484px;top:804px;" width="22" height="20" viewBox="0 0 22 20"><path d="M1 3h19M1 10h7" stroke="#333" stroke-width="1.5"/><circle cx="12" cy="3" r="2.2" fill="#f5f5f5" stroke="#333" stroke-width="1.4"/><path d="M11 12.5h2.5l3.5-3v9l-3.5-3H11z" fill="#333"/><path d="M18.5 11.5q1.5 2 0 4" fill="none" stroke="#333" stroke-width="1.3"/></svg>
<svg style="left:1509px;top:808px;" width="7" height="11" viewBox="0 0 7 11"><path d="M1 1l4 4.5L1 10" fill="none" stroke="#333" stroke-width="1.3"/></svg>
<svg style="left:1160px;top:873px;" width="23" height="13" viewBox="0 0 23 13"><rect x="1" y="1" width="20" height="11" rx="2.5" fill="none" stroke="#222" stroke-width="1.3"/><rect x="3" y="3.2" width="16.5" height="6.6" rx="1" fill="#111"/><path d="M21.5 4.5q1 2 0 4" stroke="#222" stroke-width="1.2" fill="none"/></svg>
<div class="t " style="left:1187.4px;top:874.20px;font-size:13px;color:#222;transform:scaleX(0.9839);">92%</div>
<svg style="left:1497px;top:871px;" width="19" height="19" viewBox="0 0 19 19"><path d="M9.5 1.5l1.6 1.9 2.4-.7.5 2.4 2.4.9-.8 2.4 1.6 1.9-2 1.4.2 2.5-2.5.2-1.1 2.2-2.3-1.1-2.3 1.1-1.1-2.2-2.5-.2.2-2.5-2-1.4 1.6-1.9-.8-2.4 2.4-.9.5-2.4 2.4.7z" fill="none" stroke="#444" stroke-width="1.2" stroke-linejoin="round"/><circle cx="9.5" cy="9.5" r="2.6" fill="none" stroke="#444" stroke-width="1.3"/></svg>
<div style="left:1542px;top:497px;width:10px;height:200px;background:#8c8c8c;border-radius:5px;"></div>
<div style="left:0px;top:922px;width:1567px;height:53px;background:linear-gradient(90deg,#e8e4b8 0px,#e8e9c0 300px,#e5edb4 700px,#e6efb0 1000px,#efe5c8 1095px,#f7dbf0 1180px,#f5def0 1290px,#efecd2 1345px,#f4f1d4 1440px,#f1e9d6 1567px);"></div>
<div style="left:0px;top:922px;width:1567px;height:1px;background:#d8d8c8;"></div>
<svg style="left:24px;top:937px;" width="27" height="27" viewBox="0 0 27 27"><defs><linearGradient id="wl" x1="0" y1="0" x2="1" y2="1"><stop offset="0" stop-color="#3ec3f5"/><stop offset="1" stop-color="#0f6fc6"/></linearGradient></defs><rect x="0" y="0" width="12.5" height="12.5" fill="url(#wl)"/><rect x="14" y="0" width="12.5" height="12.5" fill="url(#wl)"/><rect x="0" y="14" width="12.5" height="12.5" fill="url(#wl)"/><rect x="14" y="14" width="12.5" height="12.5" fill="url(#wl)"/></svg>
<div style="left:66px;top:934px;width:247px;height:34px;background:#f7f5e2;border-radius:17px;box-shadow:0 1px 1px rgba(0,0,0,.06);"></div>
<svg style="left:78px;top:942px;" width="17" height="17" viewBox="0 0 17 17"><circle cx="7" cy="7" r="5.5" fill="none" stroke="#222" stroke-width="1.8"/><path d="M11 11l4.5 4.5" stroke="#222" stroke-width="2.2"/></svg>
<div class="t " style="left:107px;top:942.30px;font-size:15px;color:#555;transform:scaleX(0.9679);">Search</div>
<svg style="left:329px;top:937px;" width="22" height="26" viewBox="0 0 22 26"><rect x="0" y="7" width="21" height="18" fill="#1e1e1e"/><rect x="6" y="1" width="15" height="18" fill="#c9c9c9"/><rect x="6" y="1" width="15" height="3" fill="#f4f4f4"/></svg>
<svg style="left:379px;top:935px;" width="28" height="28" viewBox="0 0 28 28"><defs><linearGradient id="eg" x1="0" y1="0" x2="1" y2="1"><stop offset="0" stop-color="#36c4e8"/><stop offset=".6" stop-color="#1a8fd6"/><stop offset="1" stop-color="#0c59a4"/></linearGradient></defs><path d="M14 1a13 13 0 0 1 13 13q0 5-5 5q-5 0-4-4q-2-7-9-5q-7 3-6 11A13 13 0 0 1 14 1z" fill="url(#eg)"/><path d="M2 17q2 9 11 10q-6-2-5-9z" fill="#1d6bb5"/><rect x="1" y="20" width="14" height="6" fill="#e8820c"/><path d="M14 27q8 0 12-6q-6 4-10 2z" fill="#2a9a6a"/></svg>
<svg style="left:430px;top:936px;" width="27" height="27" viewBox="0 0 27 27"><circle cx="13.5" cy="13.5" r="13" fill="#db3b2f"/><path d="M13.5 13.5L1.2 17.5A13 13 0 0 0 14 26.5z" fill="#2f9a48"/><path d="M13.5 13.5L14 26.5A13 13 0 0 0 25.8 9.5z" fill="#f6c02a"/><circle cx="13.5" cy="13.5" r="6.2" fill="#fff"/><circle cx="13.5" cy="13.5" r="4.8" fill="#3b7ee8"/></svg>
<svg style="left:480px;top:937px;" width="27" height="25" viewBox="0 0 27 25"><path d="M0 2h9l3 3h15v19H0z" fill="#f2b83a"/><rect x="0" y="7" width="27" height="17" fill="#fcd25c"/><rect x="7" y="16" width="13" height="6" fill="#1e74c9"/></svg>
<svg style="left:532px;top:937px;" width="23" height="23" viewBox="0 0 23 23"><path d="M4 0h10l-3 8H4z" fill="#f5c84a" opacity=".7"/><path d="M5 22a5 5 0 0 1 0-10q2-5 7-4q5 0 6 5a4.5 4.5 0 0 1 0 9z" fill="#3a8fe0"/><path d="M3 12L8 2" stroke="#e0b850" stroke-width="1.2"/></svg>
<svg style="left:580px;top:937px;" width="28" height="25" viewBox="0 0 28 25"><rect x="10" y="1" width="17" height="22" fill="#1d78d0"/><rect x="10" y="1" width="17" height="6" fill="#4fb0f0"/><rect x="0" y="6" width="15" height="15" rx="1.5" fill="#0f5fb0"/><circle cx="7.5" cy="13.5" r="4" fill="none" stroke="#fff" stroke-width="2"/></svg>
<svg style="left:631px;top:937px;" width="24" height="25" viewBox="0 0 24 25"><circle cx="12" cy="12" r="11" fill="none" stroke="#2d6fc3" stroke-width="2"/><path d="M5 21l-2 3 5-2" fill="#2d6fc3"/><path d="M6 14q3-6 9-5q4 1 3 5q-3 3-8 1" fill="none" stroke="#2d6fc3" stroke-width="2.5"/><circle cx="11" cy="14" r="2" fill="#2d6fc3"/></svg>
<svg style="left:681px;top:937px;" width="25" height="25" viewBox="0 0 25 25"><circle cx="12.5" cy="12.5" r="11" fill="none" stroke="#1f2a44" stroke-width="2"/><path d="M6 6q8-3 13 5q2 5-2 9" fill="none" stroke="#1f2a44" stroke-width="1.7"/><path d="M9 4q7 0 10 7" fill="none" stroke="#8ab87a" stroke-width="1.3"/></svg>
<svg style="left:729px;top:935px;" width="29" height="29" viewBox="0 0 29 29"><circle cx="14.5" cy="14.5" r="14" fill="#1f5ee8"/><text x="14.5" y="19" text-anchor="middle" font-family="Liberation Sans" font-weight="700" font-size="12" fill="#fff">zm</text></svg>
<svg style="left:779px;top:931px;" width="34" height="32" viewBox="0 0 34 32"><circle cx="13" cy="9" r="3.5" fill="#7b83eb"/><rect x="3" y="13" width="22" height="18" rx="3" fill="#5b5fc7"/><rect x="18" y="14" width="14" height="15" rx="5" fill="#7b83eb"/><rect x="5" y="19" width="10" height="11" fill="#4b53bc"/><path d="M8 22h5M10.5 22v7" stroke="#fff" stroke-width="1.6"/><circle cx="25" cy="9" r="7.5" fill="#d21d23"/></svg>
<svg style="left:831px;top:937px;" width="26" height="25" viewBox="0 0 26 25"><circle cx="13" cy="12.5" r="12" fill="#22a3e3"/><path d="M6 4q10-3 13 5q1 5-5 6l6 8" fill="none" stroke="#fff" stroke-width="2.6"/><path d="M8 24q-4-6 0-12" fill="none" stroke="#fff" stroke-width="2.4"/></svg>
<div style="left:440.5px;top:968px;width:5px;height:2px;background:#6a6a5a;border-radius:1px;"></div>
<div style="left:490.5px;top:968px;width:5px;height:2px;background:#6a6a5a;border-radius:1px;"></div>
<div style="left:590.5px;top:968px;width:5px;height:2px;background:#6a6a5a;border-radius:1px;"></div>
<div style="left:740.5px;top:968px;width:5px;height:2px;background:#6a6a5a;border-radius:1px;"></div>
<div style="left:790.5px;top:968px;width:5px;height:2px;background:#6a6a5a;border-radius:1px;"></div>
<div style="left:840.5px;top:968px;width:5px;height:2px;background:#6a6a5a;border-radius:1px;"></div>
<svg style="left:1101px;top:930px;" width="30" height="31" viewBox="0 0 30 31"><circle cx="12" cy="19" r="11.5" fill="#f49a1c"/><circle cx="12" cy="19" r="8" fill="#fbb03b" opacity=".6"/><circle cx="19.5" cy="9" r="8" fill="#c9302c"/><text x="19.5" y="13" text-anchor="middle" font-family="Liberation Sans" font-size="11" fill="#fff">1</text></svg>
<div class="t " style="left:1134.9px;top:934.00px;font-size:13px;color:#222;transform:scaleX(0.8949);-webkit-text-stroke:0.3px #222;">41°F</div>
<div class="t " style="left:1134.9px;top:952.50px;font-size:13px;color:#5a5a5a;transform:scaleX(1.0173);">Sunny</div>
<svg style="left:1285px;top:946px;" width="14" height="9" viewBox="0 0 14 9"><path d="M1.5 7.5l5.5-5.5 5.5 5.5" fill="none" stroke="#333" stroke-width="1.7"/></svg>
<svg style="left:1314px;top:938px;" width="28" height="21" viewBox="0 0 28 21"><path d="M6 2q3 0 3 4v3q0 3-3 3t-3-3V6q0-4 3-4zM1.5 9q0 6 4.5 6t4.5-6M6 15v4" fill="none" stroke="#3f66a8" stroke-width="1.5"/><path d="M14 11L26 4 21 19l-2-6z" fill="none" stroke="#4060a0" stroke-width="1.6" stroke-linejoin="round"/></svg>
<div style="left:1348px;top:926px;width:92px;height:44px;background:rgba(255,255,240,0.35);border-radius:4px;"></div>
<svg style="left:1356px;top:943px;" width="16" height="13" viewBox="0 0 16 13"><path d="M1.5 5Q8-1 14.5 5M4 7.5Q8 4 12 7.5" fill="none" stroke="#222" stroke-width="1.6"/><circle cx="8" cy="10.5" r="1.8" fill="#222"/></svg>
<svg style="left:1381px;top:941px;" width="18" height="17" viewBox="0 0 18 17"><path d="M2 6h3.5L9 2.5v12L5.5 11H2z" fill="none" stroke="#222" stroke-width="1.5" stroke-linejoin="round"/><path d="M12 5.5q2 3 0 6M14.5 3q3.5 5.5 0 11" fill="none" stroke="#222" stroke-width="1.5"/></svg>
<svg style="left:1409px;top:942px;" width="26" height="14" viewBox="0 0 26 14"><rect x="1" y="1" width="21.5" height="12" rx="3" fill="#111"/><path d="M23 4.5q1.5 2.5 0 5" stroke="#111" stroke-width="1.5" fill="none"/></svg>
<div class="t " style="left:1457.2px;top:934.00px;font-size:13px;color:#2a2a2a;transform:scaleX(1.0121);">7:08 PM</div>
<div class="t " style="left:1451.4px;top:952.50px;font-size:13px;color:#2a2a2a;transform:scaleX(1.0829);">4/8/2026</div>
<svg style="left:1515px;top:937px;" width="18" height="22" viewBox="0 0 18 22"><path d="M2 16q2-2 2-6q0-6 5.5-6.5q5 .5 5 6.5q0 4 2 6z" fill="#111"/><rect x="1" y="16" width="16" height="2" fill="#111"/><circle cx="9" cy="20" r="1.6" fill="#111"/><path d="M6 9l5 5M11 9l-5 5" stroke="#eee" stroke-width="1.2"/></svg>
<div class="t " style="left:1635px;top:929.68px;font-size:24px;color:#ffffff;font-family:'Liberation Mono',monospace;transform:scaleX(0.9026);-webkit-text-stroke:0.7px #fff;">2026-04-08 19:07:19</div>
</body></html>
